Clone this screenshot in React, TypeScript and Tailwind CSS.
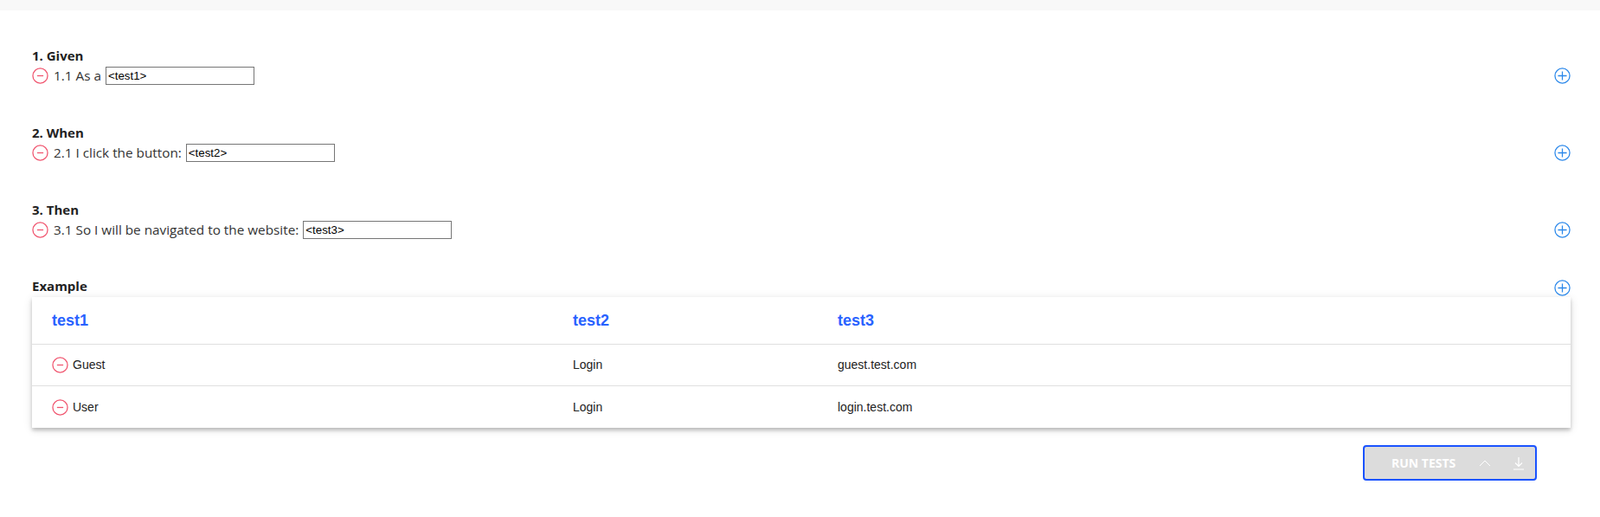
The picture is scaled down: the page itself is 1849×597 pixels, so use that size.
import React from 'react';

const MinusIcon = ({ size = 19 }: { size?: number }) => (
  <svg width={size} height={size} viewBox="0 0 24 24" fill="none" stroke="#f0546e" strokeWidth={1.6}>
    <circle cx="12" cy="12" r="10.8" />
    <path d="M7.4 12h9.2" />
  </svg>
);

const PlusIcon = () => (
  <svg width={19} height={19} viewBox="0 0 24 24" fill="none" stroke="#2b88ea" strokeWidth={1.6}>
    <circle cx="12" cy="12" r="10.8" />
    <path d="M5.6 12h12.8M12 5.6v12.8" />
  </svg>
);

interface StepProps {
  title: string;
  num: string;
  text: string;
  value: string;
}

const Step: React.FC<StepProps> = ({ title, num, text, value }) => (
  <div className="h-[89px]">
    <div className="h-[21px] text-[15px] font-bold leading-[21px] text-[#222]">{title}</div>
    <div className="mt-[2px] flex h-[21px] items-center justify-between">
      <div className="flex items-center">
        <MinusIcon />
        <span className="ml-[6px] text-[15.3px] leading-[21px] text-[#333]">
          {num} {text}
        </span>
        <input
          readOnly
          defaultValue={value}
          className="ml-[5px] h-[21px] w-[172px] border border-[#767676] px-[2px] font-['Liberation_Sans',Arial,sans-serif] text-[13.33px] text-black outline-none"
        />
      </div>
      <PlusIcon />
    </div>
  </div>
);

const rows = [
  { a: 'Guest', b: 'Login', c: 'guest.test.com' },
  { a: 'User', b: 'Login', c: 'login.test.com' },
];

export default function App() {
  return (
    <div className="min-h-[597px] bg-white font-['Open_Sans','Noto_Sans',sans-serif]">
      <div className="h-[12px] bg-[#f8f8f8]" />
      <div className="pl-[37px] pr-[34px] pt-[42px]">
        <Step title="1. Given" num="1.1" text="As a" value="<test1>" />
        <Step title="2. When" num="2.1" text="I click the button:" value="<test2>" />
        <Step title="3. Then" num="3.1" text="So I will be navigated to the website:" value="<test3>" />

        <div className="flex h-[22px] items-center justify-between">
          <span className="pb-[4px] text-[15px] font-bold text-[#222]">Example</span>
          <PlusIcon />
        </div>

        <div className="bg-white font-['Liberation_Sans',Arial,sans-serif] shadow-[0_3px_4px_rgba(0,0,0,0.2),0_2px_10px_rgba(0,0,0,0.12)]">
          <div className="grid h-[55px] grid-cols-[602px_306px_1fr] items-center border-b border-[#e0e0e0] pl-[23px] text-[18px] font-bold text-[#2962ff]">
            <span>test1</span>
            <span>test2</span>
            <span>test3</span>
          </div>
          {rows.map((r, i) => (
            <div
              key={r.a}
              className={`grid h-[48px] grid-cols-[602px_306px_1fr] items-center pl-[23px] text-[14px] text-[#222] ${
                i < rows.length - 1 ? 'border-b border-[#e0e0e0]' : ''
              }`}
            >
              <span className="flex items-center gap-[5px]">
                <MinusIcon />
                {r.a}
              </span>
              <span>{r.b}</span>
              <span>{r.c}</span>
            </div>
          ))}
        </div>

        <div className="mt-[20px] flex justify-end pr-[39px]">
          <button className="flex h-[41px] w-[201px] items-center rounded-[4px] border-2 border-[#1a53ff] bg-[#dcdcdc] pl-[31px] text-[14px] font-bold text-white">
            <span>RUN TESTS</span>
            <svg className="ml-[27px]" width={14} height={10} viewBox="0 0 14 10" fill="none" stroke="white" strokeWidth={1}>
              <path d="M1 8l6-6 6 6" />
            </svg>
            <svg className="ml-[25px]" width={14} height={16} viewBox="0 0 14 16" fill="none" stroke="white" strokeWidth={1.2}>
              <path d="M7 1v10M3 7.5l4 4 4-4M1 15h12" />
            </svg>
          </button>
        </div>
      </div>
    </div>
  );
}
